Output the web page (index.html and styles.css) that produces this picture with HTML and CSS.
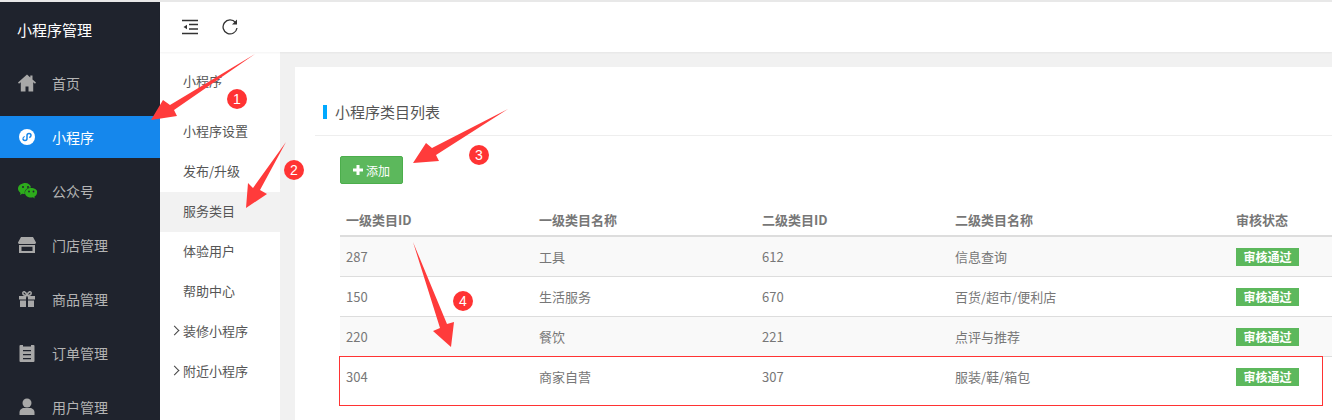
FILE: index.html
```html
<!DOCTYPE html>
<html>
  <head>
    <meta charset="utf-8">
    <title>小程序管理</title>
    <link rel="stylesheet" href="styles.css">
  </head>
  <body>
    <div class="app">

      <!-- left menu -->
      <div class="sidebar">
        <div class="logo">小程序管理</div>
        <div class="nav">
          <div class="nav-item">
            <svg class="nav-icon" viewBox="0 0 18 18"><path fill="#a8a8a8" d="M9 .5 0 8.600l1 1.100 1.800-1.500V17.500h4.700v-5h3v5h4.700V8.200L17 9.700l1-1.100-3.500-3.100V1.500h-2.200v2z"/></svg>
            <span>首页</span>
          </div>
          <div class="nav-item active">
            <svg class="nav-icon" viewBox="0 0 18 18"><circle cx="9" cy="9" r="8" fill="#fff"/><path fill="none" stroke="#1587ec" stroke-width="1.500" d="M5 10.500a2 2 0 1 0 4 0v-3a2 2 0 1 1 4 0c0 1.200-.8 1.800-1.800 2"/><path fill="none" stroke="#1587ec" stroke-width="1.200" d="M6.800 8.500C6 8.700 5 9.400 5 10.500"/></svg>
            <span>小程序</span>
          </div>
          <div class="nav-item">
            <svg class="nav-icon wide" viewBox="0 0 20 18"><path fill="#2dab1c" d="M7.500 1C3.900 1 0 3.200 0 6.600c0 2 1.100 3.400 2.500 4.400L2 13l2.300-1.300c.9.300 1.700.4 2.600.4a5 5 0 0 1-.2-1.400c0-3 2.900-5.200 6.400-5.200C12.300 2.700 10.100 1 7.500 1z"/><path fill="#2dab1c" d="M13 6c-3.300 0-6 2-6 4.800s2.700 4.800 6 4.800c.7 0 1.300-.1 1.900-.3l1.900 1.100-.5-1.700c1.600-.9 2.700-2.300 2.700-3.900C20 8 16.300 6 13 6z"/><circle cx="5" cy="5" r="1" fill="#1f232d"/><circle cx="10" cy="5" r="1" fill="#1f232d"/><circle cx="11" cy="9.500" r=".9" fill="#1f232d"/><circle cx="15.500" cy="9.500" r=".9" fill="#1f232d"/></svg>
            <span>公众号</span>
          </div>
          <div class="nav-item">
            <svg class="nav-icon" viewBox="0 0 18 18"><path fill="#a8a8a8" fill-rule="evenodd" d="M3 1h12l3 5.500c0 1-1 1.500-2 1.500H2C1 8 0 7.500 0 6.500zM1 9h16v8H1zm2.500 1.800V15h11v-4.200z"/></svg>
            <span>门店管理</span>
          </div>
          <div class="nav-item">
            <svg class="nav-icon" viewBox="0 0 18 18"><path fill="#a8a8a8" d="M1 6h7v3.500H1zm9 0h7v3.500h-7zM2 10.500h6V17H2zm8 0h6V17h-6z"/><path fill="none" stroke="#a8a8a8" stroke-width="1.500" d="M9 5.500C7 5.500 4.800 4.800 4.800 3S7.500.8 9 5.500c1.500-4.700 4.200-4.300 4.200-2.500S11 5.500 9 5.500z"/></svg>
            <span>商品管理</span>
          </div>
          <div class="nav-item">
            <svg class="nav-icon" viewBox="0 0 18 18"><path fill="#a8a8a8" fill-rule="evenodd" d="M2.500 1H5v1.500h8V1h2.500A1 1 0 0 1 16.500 2v15a1 1 0 0 1-1 1h-13a1 1 0 0 1-1-1V2a1 1 0 0 1 1-1zM5 6v1.200h8V6zm0 4v1.200h8V10zm0 4v1.200h8V14z"/></svg>
            <span>订单管理</span>
          </div>
          <div class="nav-item">
            <svg class="nav-icon" viewBox="0 0 18 18"><circle cx="9" cy="5" r="4.500" fill="#a8a8a8"/><path fill="#a8a8a8" d="M1.500 17v-2.500C1.500 11.500 4 10 6 10h6c2 0 4.500 1.500 4.500 4.500V17z"/></svg>
            <span>用户管理</span>
          </div>
        </div>
      </div>

      <div class="main">
        <div class="topbar">
          <svg class="tool" viewBox="0 0 16 16"><path fill="none" stroke="#333" stroke-width="1.300" d="M0 1.500h16M0 14.500h16M7 5.500h9M7 10h9"/><path fill="#333" d="M1.500 8 5 5.800v4.400z"/></svg>
          <svg class="tool" viewBox="0 0 16 16"><path fill="none" stroke="#333" stroke-width="1.300" d="M13.500 3.500A7 7 0 1 0 15 9"/><path fill="#333" d="M15 .5v5h-5z"/></svg>
        </div>

        <div class="body">
          <div class="submenu">
            <div class="sub-item first">小程序</div>
            <div class="sub-item">小程序设置</div>
            <div class="sub-item">发布/升级</div>
            <div class="sub-item current">服务类目</div>
            <div class="sub-item">体验用户</div>
            <div class="sub-item">帮助中心</div>
            <div class="sub-item"><i class="chevron"></i>装修小程序</div>
            <div class="sub-item"><i class="chevron"></i>附近小程序</div>
          </div>

          <div class="content">
            <div class="panel">
              <div class="panel-head"><span class="panel-title">小程序类目列表</span></div>
              <div class="panel-body">
                <button class="btn-add"><svg viewBox="0 0 10 10"><path fill="#fff" d="M3.500 0h3v3.500H10v3H6.500V10h-3V6.500H0v-3h3.500z"/></svg>添加</button>
                <table class="cat-table">
                  <colgroup>
                    <col class="c1"><col class="c2"><col class="c3"><col class="c4"><col class="c5">
                  </colgroup>
                  <thead>
                    <tr><th>一级类目ID</th><th>一级类目名称</th><th>二级类目ID</th><th>二级类目名称</th><th>审核状态</th></tr>
                  </thead>
                  <tbody>
                    <tr><td>287</td><td>工具</td><td>612</td><td>信息查询</td><td><span class="badge">审核通过</span></td></tr>
                    <tr><td>150</td><td>生活服务</td><td>670</td><td>百货/超市/便利店</td><td><span class="badge">审核通过</span></td></tr>
                    <tr><td>220</td><td>餐饮</td><td>221</td><td>点评与推荐</td><td><span class="badge">审核通过</span></td></tr>
                    <tr><td>304</td><td>商家自营</td><td>307</td><td>服装/鞋/箱包</td><td><span class="badge">审核通过</span></td></tr>
                  </tbody>
                </table>
              </div>
            </div>
          </div>
        </div>
      </div>
    </div>

    <!-- annotations drawn on top of the screenshot -->
    <div class="mark-box"></div>
    <svg class="arrows" width="1332" height="420" viewBox="0 0 1332 420">
      <polygon points="151,120 163,100 170,105 255,54 174,110 177,116"/>
      <polygon points="246,208 248,183 253,188 286,142 260,190 267,194"/>
      <polygon points="413,163 426,143 432,148 508,109 436,155 439,161"/>
      <polygon points="451,347 433,331 440,328 413,242 447,324 454,322"/>
    </svg>
    <span class="step s1">1</span>
    <span class="step s2">2</span>
    <span class="step s3">3</span>
    <span class="step s4">4</span>
  </body>
</html>
```

FILE: styles.css
```css
html, body { margin: 0; padding: 0; height: 420px; overflow: hidden; }

body {
  position: relative;
  background: #f1f1f1;
  font-family: "Noto Sans CJK SC", "Open Sans", sans-serif;
  font-size: 13px;
  color: #555;
}

.app {
  display: flex;
  height: 418px;
  border-top: 2px solid #e8e8e8;
}

/* left menu */
.sidebar {
  width: 160px;
  flex: none;
  background: #1f232d;
  overflow: hidden;
}

.logo {
  height: 60px;
  line-height: 55px;
  padding-left: 17px;
  font-size: 15px;
  color: #fff;
}

.nav {
  display: flex;
  flex-direction: column;
  gap: 12px;
}

.nav-item {
  height: 42px;
  flex: none;
  display: flex;
  align-items: center;
  padding-left: 18px;
  font-size: 14px;
  color: #b4b4b4;
}

.nav-item.active {
  background: #1587ec;
  color: #fff;
}

.nav-icon {
  width: 18px;
  height: 18px;
  margin-right: 16px;
  flex: none;
}

.nav-icon.wide {
  width: 20px;
  margin-right: 14px;
}

/* main */
.main {
  flex: 1;
  min-width: 0;
  display: flex;
  flex-direction: column;
}

.topbar {
  height: 50px;
  flex: none;
  display: flex;
  align-items: center;
  gap: 24px;
  padding-left: 22px;
  background: #fff;
  box-shadow: 0 1px 2px rgba(0,0,0,0.05);
  position: relative;
}

.tool { width: 16px; height: 16px; }

.body {
  flex: 1;
  display: flex;
  min-height: 0;
}

.submenu {
  width: 120px;
  flex: none;
  background: #fff;
  padding-top: 10px;
}

.sub-item {
  position: relative;
  height: 40px;
  line-height: 38px;
  padding-left: 23px;
}

.sub-item.first { margin-bottom: 10px; }
.sub-item.current { background: #f2f2f2; }

.chevron {
  position: absolute;
  left: 11px;
  top: 15px;
  width: 6px;
  height: 6px;
  border-top: 1px solid #444;
  border-right: 1px solid #444;
  transform: rotate(45deg);
}

.content {
  flex: 1;
  min-width: 0;
  padding: 15px 0 0 15px;
}

.panel {
  background: #fff;
  height: 100%;
}

.panel-head {
  height: 69px;
  margin-left: 20px;
  border-bottom: 1px solid #eee;
  display: flex;
  align-items: flex-end;
  box-sizing: border-box;
  padding-left: 8px;
  padding-bottom: 16px;
}

.panel-title {
  border-left: 4px solid #00a9ff;
  padding-left: 8px;
  font-size: 15px;
  line-height: 14px;
  color: #555;
}

.panel-body { padding: 20px 0 0 45px; }

.btn-add {
  display: flex;
  align-items: center;
  justify-content: center;
  gap: 3px;
  width: 63px;
  height: 28px;
  padding: 0;
  background: #5cb85c;
  border: 1px solid #4cae4c;
  border-radius: 2px;
  color: #fff;
  font-family: inherit;
  font-size: 12px;
}

.btn-add svg { width: 10px; height: 10px; }

.cat-table {
  width: 992px;
  margin-top: 19px;
  border-collapse: collapse;
  table-layout: fixed;
  color: #777;
}

.c1 { width: 193px; }
.c2 { width: 223px; }
.c3 { width: 193px; }
.c4 { width: 281px; }
.c5 { width: 102px; }

.cat-table th {
  height: 32px;
  padding: 0 6px;
  text-align: left;
  font-weight: bold;
  border-bottom: 2px solid #ddd;
}

.cat-table td {
  height: 39px;
  padding: 0 6px;
  border-bottom: 1px solid #ddd;
}

.cat-table tbody tr:nth-child(odd) { background: #f9f9f9; }
.cat-table tbody tr:last-child { background: #fff; }
.cat-table tbody tr:last-child td { border-bottom: 0; }

.badge {
  display: block;
  width: 63px;
  height: 18px;
  line-height: 18px;
  background: #5cb85c;
  color: #fff;
  font-size: 12px;
  font-weight: bold;
  text-align: center;
}

/* annotations */
.mark-box {
  position: absolute;
  left: 339px;
  top: 356px;
  width: 982px;
  height: 48px;
  border: 1px solid #f33;
}

.arrows {
  position: absolute;
  left: 0;
  top: 0;
}

.arrows polygon { fill: #ff3b3b; }

.step {
  position: absolute;
  width: 20px;
  height: 20px;
  line-height: 20px;
  border-radius: 50%;
  background: #f33;
  color: #fff;
  font-family: "Liberation Sans", sans-serif;
  font-size: 14px;
  text-align: center;
}

.s1 { left: 227px; top: 89px; }
.s2 { left: 284px; top: 160px; }
.s3 { left: 469px; top: 145px; }
.s4 { left: 453px; top: 291px; }
```
